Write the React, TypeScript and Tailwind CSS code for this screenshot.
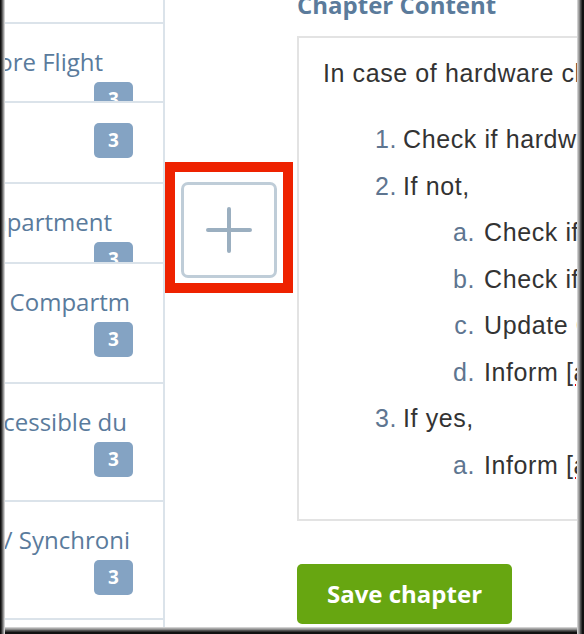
import { memo } from 'react';

const rows = [
  { h: 'h-[22px]', text: '', badge: false, first: true },
  { h: 'h-[79px]', text: 'Before Flight', pr: 'pr-[30px]', badge: true },
  { h: 'h-[81px]', text: '', badge: true, badgeOnly: true },
  { h: 'h-[80px]', text: 'Cabin Compartment', pr: 'pr-[21px]', badge: true },
  { h: 'h-[120px]', text: 'Door Compartm', pr: 'pr-[3px]', badge: true },
  { h: 'h-[118px]', text: 'Inaccessible du', pr: 'pr-[6px]', badge: true },
  { h: 'h-[118px]', text: 'Data / Synchroni', pr: 'pr-[3px]', badge: true },
  { h: 'h-[40px]', text: '', badge: false },
];

const Badge = () => (
  <div className="ml-auto w-[39px] h-[35px] rounded-[5px] bg-[#84a3c3] flex items-center justify-center text-white font-bold text-[19px] leading-none">
    3
  </div>
);

const steps: { marker: string; text: string; sub?: boolean; spell?: boolean }[] = [
  { marker: '1.', text: 'Check if hardware is available' },
  { marker: '2.', text: 'If not,' },
  { marker: 'a.', text: 'Check if spare is in stock', sub: true },
  { marker: 'b.', text: 'Check if replacement ordered', sub: true },
  { marker: 'c.', text: 'Update CMMS record', sub: true },
  { marker: 'd.', text: 'Inform [a', sub: true, spell: true },
  { marker: '3.', text: 'If yes,' },
  { marker: 'a.', text: 'Inform [a', sub: true, spell: true },
];

const App = memo(() => {
  return (
    <div className="relative w-[584px] h-[634px] overflow-hidden bg-white font-['Open_Sans',sans-serif]">
      <div className="flex h-full">
        {/* Sidebar list */}
        <div className="w-[165px] shrink-0 border-r-2 border-[#dbe3ea] pr-[30px]">
          {rows.map((row, idx) => (
            <div
              key={idx}
              className={`${row.h} overflow-hidden ${row.first ? '' : 'border-t-2 border-[#dbe3ea]'} -mr-[30px] pr-[30px]`}
            >
              {row.badgeOnly ? (
                <div className="pt-[20px]">
                  <Badge />
                </div>
              ) : row.badge ? (
                <div className="pt-[22px]">
                  <div className={`flex justify-end overflow-hidden ${row.pr}`}>
                    <span className="shrink-0 whitespace-nowrap text-[24px] leading-[32px] text-[#5a7b9c]">{row.text}</span>
                  </div>
                  <div className="mt-[4px]">
                    <Badge />
                  </div>
                </div>
              ) : null}
            </div>
          ))}
        </div>

        {/* Add chapter */}
        <div className="w-[132px] shrink-0 pt-[162px]">
          <div className="w-[128px] h-[131px] border-[10px] border-[#ee2200] pl-[6px] pt-[10px]">
            <button className="w-[96px] h-[96px] rounded-[7px] border-[3px] border-[#bfcdd8] bg-white flex items-center justify-center">
              <svg width="46" height="46" viewBox="0 0 46 46">
                <path d="M23 2v42M2 23h42" stroke="#9bafc0" strokeWidth="4" strokeLinecap="round" />
              </svg>
            </button>
          </div>
        </div>

        {/* Chapter content */}
        <div className="flex-1 min-w-0">
          <h2 className="-mt-[12px] mb-[15px] text-[24px] leading-[33px] font-bold text-[#5b7b9b] whitespace-nowrap">
            Chapter Content
          </h2>
          <div className="w-[420px] border-2 border-[#e3e3e3] pl-[24px] pt-[12px] pb-[31px] font-['Liberation_Sans',Arial,sans-serif] text-[25px] tracking-[0.6px] text-[#333] whitespace-nowrap">
            <p className="leading-[46px]">In case of hardware change</p>
            <div className="mt-[20px]">
              {steps.map((s, idx) => (
                <div key={idx} className="flex leading-[46.5px]">
                  <span className={`${s.sub ? 'w-[161px] pr-[9px]' : 'w-[80px] pr-[6px]'} text-right text-[#5e7590] shrink-0`}>
                    {s.marker}
                  </span>
                  <span>
                    {s.spell ? (
                      <>
                        Inform <span className="underline decoration-dotted decoration-[#e00] decoration-2 underline-offset-4">[a</span>
                      </>
                    ) : (
                      s.text
                    )}
                  </span>
                </div>
              ))}
            </div>
          </div>
          <button className="mt-[43px] w-[215px] h-[60px] rounded-[5px] bg-[#67a611] text-white font-bold text-[24px]">
            Save chapter
          </button>
        </div>
      </div>

      {/* Window frame */}
      <div className="pointer-events-none absolute inset-0 shadow-[inset_1px_0_0_#111,inset_2px_0_0_#333,inset_3px_0_0_#666,inset_4px_0_0_#999,inset_5px_0_0_#d0d0d0,inset_-2px_0_0_#111,inset_-3px_0_0_#333,inset_-4px_0_0_#555,inset_-5px_0_0_#888,inset_-6px_0_0_#aaa,inset_-7px_0_0_#d0d0d0,inset_0_-2px_0_#111,inset_0_-3px_0_#333,inset_0_-4px_0_#555,inset_0_-5px_0_#888,inset_0_-6px_0_#aaa,inset_0_-7px_0_#d0d0d0]" />
    </div>
  );
});

App.displayName = 'App';

export default App;
